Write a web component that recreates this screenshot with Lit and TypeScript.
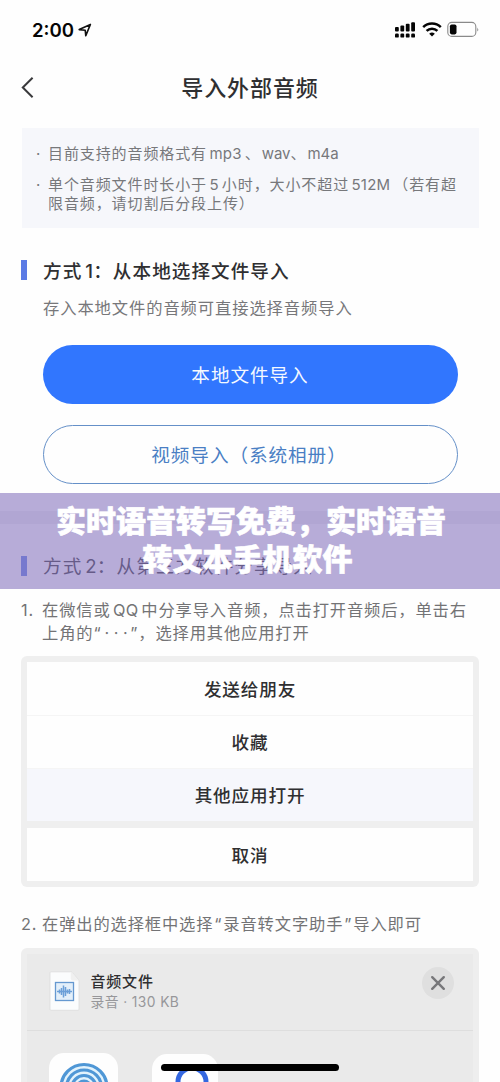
import { LitElement, html, css, svg } from "lit";
import { customElement } from "lit/decorators.js";

@customElement("app-root")
export class AppRoot extends LitElement {
  static styles = css`
    :host {
      display: block;
      position: relative;
      width: 500px;
      height: 1082px;
      overflow: hidden;
      background: #fefefe;
      color: #2f2f31;
      font-family: Inter, "Noto Sans CJK SC", sans-serif;
      white-space: nowrap;
    }
    * { box-sizing: border-box; }
    svg { display: block; }
    .status {
      display: flex;
      align-items: center;
      height: 60px;
      padding: 0 21px 0 32px;
      color: #050505;
    }
    .time { font-size: 18.6px; font-weight: 600; line-height: 24px; }
    .arrow { margin: 0 auto 0 4px; }
    .nav {
      display: grid;
      grid-template-columns: 60px 1fr 60px;
      align-items: center;
      height: 55px;
    }
    .nav svg { margin: -1px 0 0 21px; }
    .nav h1 {
      margin: 0;
      text-align: center;
      font-size: 22px;
      letter-spacing: 0.9px;
      font-weight: 500;
      line-height: 32px;
    }
    .lat { letter-spacing: 0.2px; margin: 0 3px 0 2.5px; }
    .lat.tight { letter-spacing: 0; margin-right: 0; margin-left: 1px; }
    .notice {
      margin: 13px 21px 0 22px;
      height: 100px;
      padding: 16px 0 0 14px;
      background: #f6f7fb;
      color: #77787b;
      font-size: 15px;
      letter-spacing: 0.9px;
      line-height: 19px;
    }
    .item { display: grid; grid-template-columns: 12px 1fr; }
    .item + .item { margin-top: 12px; }
    .heading {
      display: flex;
      align-items: center;
      gap: 16px;
      margin-left: 21px;
      height: 20px;
      font-size: 18.6px;
      letter-spacing: 1.05px;
      font-weight: 500;
    }
    .heading > span { padding-bottom: 2px; }
    .heading i { width: 6px; height: 20px; background: #5b7be5; }
    .heading .lat { margin: 0 0 0 3px; }
    .first { margin-top: 32px; }
    .desc {
      margin: 16px 0 0 43px;
      font-size: 16.3px;
      letter-spacing: 0.92px;
      line-height: 24px;
      color: #77777a;
    }
    .btn {
      display: flex;
      align-items: center;
      justify-content: center;
      width: 415px;
      height: 59px;
      margin: 25px 0 0 42.5px;
      padding-bottom: 2px;
      border-radius: 30px;
      background: #3176fe;
      color: #f4f9ff;
      font-size: 18.6px;
      letter-spacing: 0.95px;
    }
    .outline {
      margin-top: 21px;
      background: transparent;
      border: 1.5px solid #6590c8;
      color: #4a7fc4;
      padding-right: 2px;
    }
    .band { height: 13px; margin-top: 27px; background: #f0f0f2; }
    .second { margin-top: 32px; font-weight: 400; }
    .second > span { padding-bottom: 4px; }
    .step {
      display: grid;
      grid-template-columns: 21px 1fr;
      margin: 23px 0 0 21px;
      color: #737375;
      font-size: 16.3px;
      letter-spacing: 0.85px;
      line-height: 23px;
    }
    .step.two { margin-top: 26px; }
    .dots { letter-spacing: 4.6px; margin: 0 -2px 0 3px; font-feature-settings: "calt" 0, "ccmp" 0; }
    .q { margin: 0 1px; }
    .sheet {
      width: 458px;
      height: 231px;
      margin: 11px 0 0 21px;
      padding: 6px;
      border-radius: 6px;
      background: #efefef;
    }
    .row {
      display: flex;
      align-items: center;
      justify-content: center;
      height: 53px;
      background: #fefefe;
      font-size: 17.6px;
      letter-spacing: 0.85px;
      font-weight: 500;
    }
    .row + .row { box-shadow: inset 0 1px #f5f5f5; }
    .row.active { background: #f6f7fc; }
    .row.cancel { margin-top: 7px; box-shadow: none; }
    .share {
      width: 458px;
      height: 134px;
      margin: 12px 0 0 21px;
      padding: 6px 6px 0;
      border-radius: 6px 6px 0 0;
      background: #eeeeee;
    }
    .panel { height: 128px; background: #eaeaea; }
    .file {
      display: flex;
      height: 77px;
      padding: 17px 19px 0 22px;
      border-bottom: 1.5px solid #dedede;
    }
    .file .close { margin-top: -4px; }
    .meta { flex: 1; padding: 1px 0 0 10.5px; }
    .name { font-size: 15px; letter-spacing: 0.8px; line-height: 20px; font-weight: 500; }
    .size { font-size: 13.8px; letter-spacing: 0.4px; line-height: 20px; color: #97979a; }
    .apps { display: flex; gap: 33.5px; padding: 22px 0 0 22px; height: 51px; overflow: hidden; }
    .banner {
      position: absolute;
      left: 0;
      right: 0;
      top: 493px;
      height: 96px;
      padding: 7px 0 0 2px;
      background: rgba(138, 119, 191, 0.61);
      color: #fff;
      text-align: center;
      font-size: 30px;
      font-weight: 900;
      line-height: 38px;
      font-family: "Noto Sans CJK SC", sans-serif;
      -webkit-text-stroke: 0.6px #fff;
    }
    .home {
      position: absolute;
      left: 161px;
      top: 1064px;
      width: 178px;
      height: 7px;
      border-radius: 4px;
      background: #000;
    }
  `;

  private bars() {
    return [0, 1, 2, 3].map(
      (i) => svg`
        <rect x=${i * 5.4} y=${6 - i * 1.6} width="3.8" height=${4.4 + i * 1.6} rx="1"/>
        <rect x=${i * 5.4} y="12.6" width="3.8" height="4" rx="1.2"/>`
    );
  }

  private lat(text: string, tight = false) {
    return html`<span class="lat ${tight ? "tight" : ""}">${text}</span>`;
  }

  render() {
    return html`
      <div class="status">
        <span class="time">2:00</span>
        <svg class="arrow" width="14" height="14" viewBox="0 0 14 14" fill="none" stroke="#111" stroke-width="1.6" stroke-linejoin="round">
          <path d="M12.4 1.4 1.2 6.6l6 .6.6 5.6z"/>
        </svg>
        <svg width="84" height="18" viewBox="0 0 84 18">
          <g fill="#050505">${this.bars()}</g>
          <g fill="none" stroke="#050505" stroke-width="2.5">
            <path d="M28.2 6.2a12.4 12.4 0 0 1 17.6 0"/>
            <path d="M31.6 9.9a7.6 7.6 0 0 1 10.8 0"/>
          </g>
          <path d="M34.2 12.8a4 4 0 0 1 5.6 0L37 15.4z" fill="#050505"/>
          <rect x="52.8" y="1.4" width="28" height="14" rx="4" fill="none" stroke="#8a8a8a" stroke-width="1.1"/>
          <rect x="54.9" y="3.4" width="6.6" height="10" rx="1.8" fill="#050505"/>
          <path d="M82.4 6.4q1.6 2 0 4z" fill="#777"/>
        </svg>
      </div>
      <div class="nav">
        <svg width="13" height="21" viewBox="0 0 13 21" fill="none" stroke="#3a3a3c" stroke-width="2"><path d="M11.6 .8 1.8 10.5l9.8 9.7"/></svg>
        <h1>导入外部音频</h1>
      </div>
      <div class="notice">
        <div class="item"><span>·</span><span>目前支持的音频格式有${this.lat("mp3")}、${this.lat("wav", true)}、${this.lat("m4a", true)}</span></div>
        <div class="item"><span>·</span><span>单个音频文件时长小于${this.lat("5")}小时，大小不超过${this.lat("512M")}（若有超<br>限音频，请切割后分段上传）</span></div>
      </div>
      <div class="heading first"><i></i><span>方式${this.lat("1")}：从本地选择文件导入</span></div>
      <div class="desc">存入本地文件的音频可直接选择音频导入</div>
      <div class="btn">本地文件导入</div>
      <div class="btn outline">视频导入（系统相册）</div>
      <div class="band"></div>
      <div class="heading second"><i></i><span>方式${this.lat("2")}：从第三方软件分享导入</span></div>
      <div class="step"><span>1.</span><span>在微信或${this.lat("QQ")}中分享导入音频，点击打开音频后，单击右<br>上角的“<span class="dots">···</span>”，选择用其他应用打开</span></div>
      <div class="sheet">
        <div class="row">发送给朋友</div>
        <div class="row">收藏</div>
        <div class="row active">其他应用打开</div>
        <div class="row cancel">取消</div>
      </div>
      <div class="step two"><span>2.</span><span>在弹出的选择框中选择<span class="q">“</span>录音转文字助手<span class="q">”</span>导入即可</span></div>
      <div class="share">
        <div class="panel">
          <div class="file">
            <svg width="31" height="41" viewBox="0 0 31 41">
              <path d="M2 .8h19.5q1 0 1.8.9l6 6.6q.7.8.7 2v28q0 1-1 1H2q-1 0-1-1V1.8q0-1 1-1z" fill="#fbfcfd" stroke="#dcdcdc" stroke-width=".8"/>
              <path d="M21.8 1v6.5q0 2 2 2H30z" fill="#f0f0f0"/>
              <rect x="6.5" y="11.5" width="18" height="18" fill="#e3effa" stroke="#6598d0" stroke-width="1.3"/>
              <path d="M8 20.5h15M10.5 18.5v4M12.5 17v7M14.5 14.5v12M16.5 16v9M18.5 18.5v4M20.5 18v5" stroke="#6b9fd8" stroke-width="1.5"/>
            </svg>
            <div class="meta">
              <div class="name">音频文件</div>
              <div class="size">录音 · 130 KB</div>
            </div>
            <svg class="close" width="32" height="32" viewBox="0 0 32 32"><circle cx="16" cy="16" r="16" fill="#dfdfdf"/><path d="m10.2 10.2 11.6 11.6m0-11.6L10.2 21.8" stroke="#77777a" stroke-width="2.4" stroke-linecap="round"/></svg>
          </div>
          <div class="apps">
            <svg width="69" height="69" viewBox="0 0 69 69"><rect width="69" height="69" rx="15" fill="#fefefe"/><g fill="#e2f3fd" stroke="#4f97d6" stroke-width="3.2"><circle cx="35" cy="34.5" r="23"/><circle cx="35" cy="34.5" r="17.5"/><circle cx="35" cy="34.5" r="12"/><circle cx="35" cy="34.5" r="6.5"/></g></svg>
            <svg width="66" height="69" viewBox="0 0 66 69"><rect y="1" width="66" height="66" rx="15" fill="#fefefe"/><circle cx="40" cy="29" r="14" fill="none" stroke="#3467e0" stroke-width="5"/></svg>
          </div>
        </div>
      </div>
      <div class="banner">实时语音转写免费，实时语音<br>转文本手机软件&nbsp;</div>
      <div class="home"></div>
    `;
  }
}
